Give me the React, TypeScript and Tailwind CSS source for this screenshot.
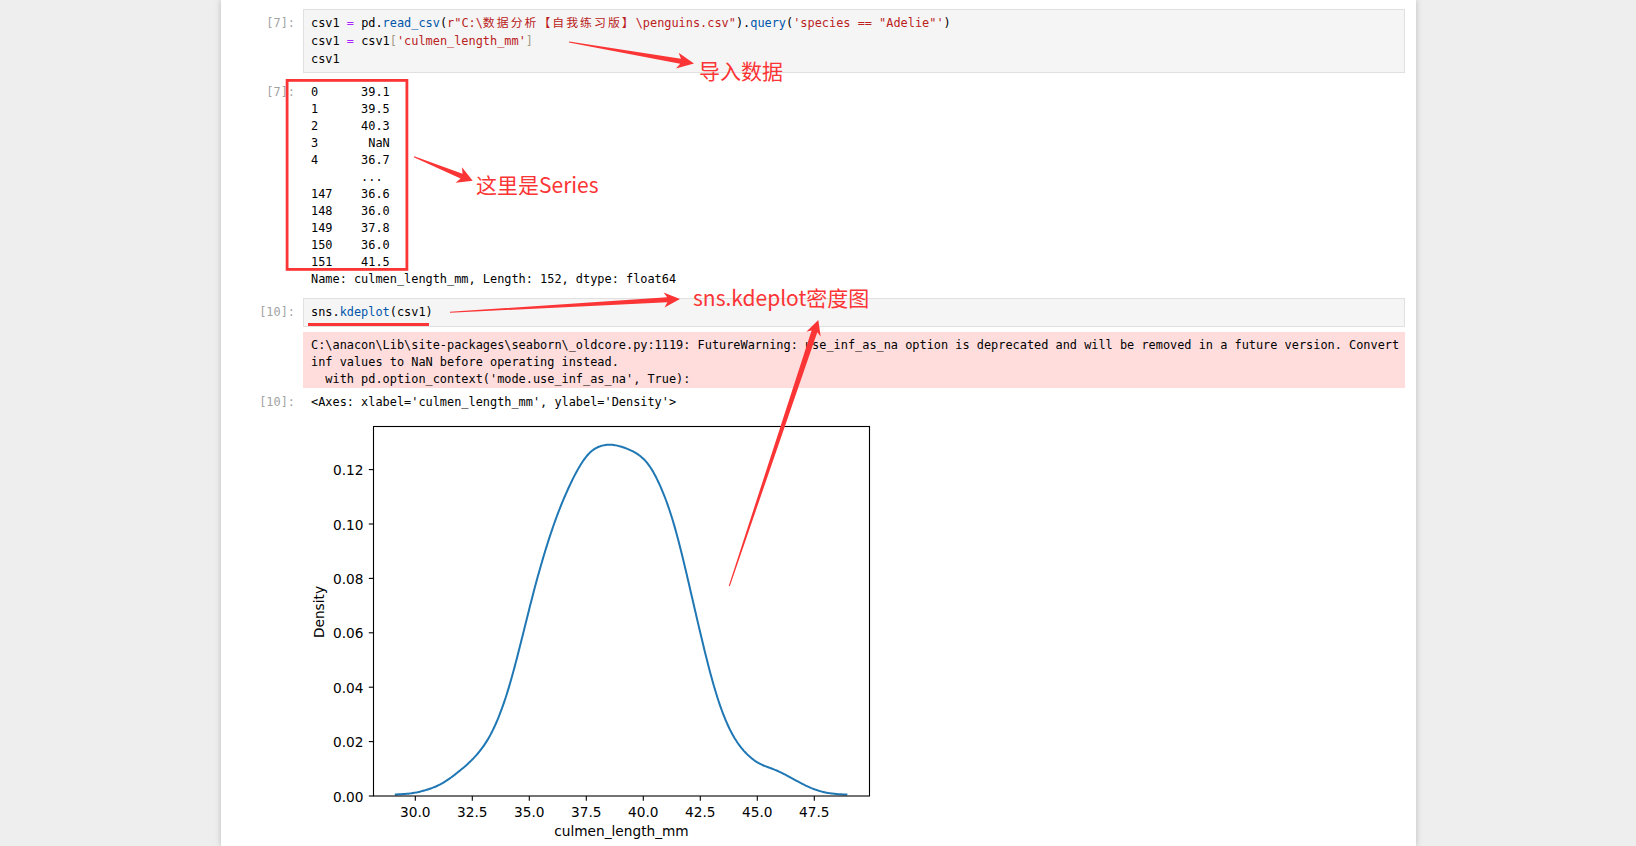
import React from 'react';

const mono = "font-['DejaVu_Sans_Mono','Noto_Sans_CJK_SC',monospace] text-[11.9px]";
const cjk = "font-['Noto_Sans_CJK_SC',sans-serif]";

// pandas Series repr, as printed
const seriesLines = [
  '0      39.1',
  '1      39.5',
  '2      40.3',
  '3       NaN',
  '4      36.7',
  '       ...',
  '147    36.6',
  '148    36.0',
  '149    37.8',
  '150    36.0',
  '151    41.5',
  'Name: culmen_length_mm, Length: 152, dtype: float64',
];

const warningLines = [
  "C:\\anacon\\Lib\\site-packages\\seaborn\\_oldcore.py:1119: FutureWarning: use_inf_as_na option is deprecated and will be removed in a future version. Convert",
  'inf values to NaN before operating instead.',
  "  with pd.option_context('mode.use_inf_as_na', True):",
];

// traced density values (x, density)
const kde: [number, number][] = [
  [29.1, 0.0004], [30.0, 0.001], [31.0, 0.0035], [31.5, 0.0062], [32.5, 0.013],
  [33.2, 0.02], [33.7, 0.029], [34.15, 0.04], [34.74, 0.06], [35.32, 0.08],
  [36.05, 0.1], [36.5, 0.1095], [37.08, 0.12], [37.66, 0.1276], [38.5, 0.1298],
  [39.4, 0.1276], [40.15, 0.1239], [40.44, 0.12], [41.03, 0.109], [41.39, 0.1],
  [41.95, 0.08], [42.49, 0.06], [43.07, 0.04], [43.5, 0.029], [44.02, 0.02],
  [44.6, 0.0145], [45.1, 0.0114], [45.84, 0.0097], [46.58, 0.0062], [47.46, 0.0023],
  [48.2, 0.0008], [48.95, 0.0004],
];

const px = (v: number) => 415.3 + 22.8 * (v - 30);
const py = (d: number) => 797 - d * 2720;

// linear interpolation on a fine grid, then a small gaussian blur to drop the kinks
const smoothCurve = () => {
  const step = 0.05;
  const xs: number[] = [];
  const ys: number[] = [];
  for (let v = kde[0][0]; v <= kde[kde.length - 1][0] + 1e-9; v += step) {
    let j = 0;
    while (j < kde.length - 2 && kde[j + 1][0] < v) j++;
    const [a, fa] = kde[j];
    const [b, fb] = kde[j + 1];
    const t = Math.min(1, Math.max(0, (v - a) / (b - a)));
    xs.push(v);
    ys.push(fa + (fb - fa) * t);
  }
  const sigma = 0.32;
  const r = Math.ceil((sigma * 3) / step);
  const out = ys.map((_, i) => {
    let sum = 0;
    let w = 0;
    for (let k = -r; k <= r; k++) {
      const idx = i + k;
      if (idx < 0 || idx >= ys.length) continue;
      const g = Math.exp(-((k * step) ** 2) / (2 * sigma * sigma));
      sum += ys[idx] * g;
      w += g;
    }
    return sum / w;
  });
  return xs
    .map((v, i) => `${i === 0 ? 'M' : 'L'}${px(v).toFixed(2)},${py(out[i]).toFixed(2)}`)
    .join(' ');
};

// tapered annotation arrow, thin at the tail
const arrowPoints = (x1: number, y1: number, x2: number, y2: number, tw: number, sw: number, hl: number, hw: number) => {
  const len = Math.hypot(x2 - x1, y2 - y1);
  const ux = (x2 - x1) / len;
  const uy = (y2 - y1) / len;
  const nx = -uy;
  const ny = ux;
  const neck = [x2 - ux * hl * 0.8, y2 - uy * hl * 0.8];
  const barb = [x2 - ux * hl, y2 - uy * hl];
  const pts = [
    [x1 + nx * tw / 2, y1 + ny * tw / 2],
    [neck[0] + nx * sw / 2, neck[1] + ny * sw / 2],
    [barb[0] + nx * hw, barb[1] + ny * hw],
    [x2, y2],
    [barb[0] - nx * hw, barb[1] - ny * hw],
    [neck[0] - nx * sw / 2, neck[1] - ny * sw / 2],
    [x1 - nx * tw / 2, y1 - ny * tw / 2],
  ];
  return pts.map(p => `${p[0].toFixed(1)},${p[1].toFixed(1)}`).join(' ');
};

const Prompt: React.FC<{ label: string; className?: string }> = ({ label, className = '' }) => (
  <div className={`w-[82px] shrink-0 pr-[8px] text-right text-[#a3a3a3] ${className}`}>{label}</div>
);

const Chart = () => {
  const yTicks = [0, 0.02, 0.04, 0.06, 0.08, 0.1, 0.12];
  const xTicks = [30, 32.5, 35, 37.5, 40, 42.5, 45, 47.5];
  const curve = smoothCurve();
  return (
    <svg width="580" height="434" className="block overflow-visible">
      <g transform="translate(-303,-412)" fontFamily="DejaVu Sans, sans-serif" fontSize="13.7" fill="#000">
        <path d={curve} fill="none" stroke="#1f77b4" strokeWidth="2" strokeLinejoin="round" strokeLinecap="butt" />
        <rect x="373.5" y="427.5" width="496" height="369.5" fill="none" stroke="#000" strokeWidth="1.1" />
        {yTicks.map(t => (
          <g key={t}>
            <line x1="368.8" x2="373.5" y1={py(t)} y2={py(t)} stroke="#000" strokeWidth="1.1" />
            <text x="363.5" y={py(t) + 5.5} textAnchor="end">{t.toFixed(2)}</text>
          </g>
        ))}
        {xTicks.map(t => (
          <g key={t}>
            <line x1={px(t)} x2={px(t)} y1="797" y2="801.7" stroke="#000" strokeWidth="1.1" />
            <text x={px(t)} y="818.2" textAnchor="middle">{t.toFixed(1)}</text>
          </g>
        ))}
        <text x="621.5" y="837" textAnchor="middle">culmen_length_mm</text>
        <text x="323.5" y="613" textAnchor="middle" transform="rotate(-90, 323.5, 613)">Density</text>
      </g>
    </svg>
  );
};

const Annotations = () => (
  <>
    <svg className="pointer-events-none absolute left-0 top-0" width="1636" height="846">
      <g fill="#fb3535">
        <polygon points={arrowPoints(569, 42, 694, 63.5, 1, 5, 17, 8)} />
        <polygon points={arrowPoints(414, 156.7, 472.7, 180.7, 1, 5, 15, 8.4)} />
        <polygon points={arrowPoints(450, 312.3, 680, 299, 1, 5, 16, 7.5)} />
        <polygon points={arrowPoints(729.3, 586, 818.3, 320, 1, 6, 15, 7.6)} />
        <rect x="308" y="323" width="121" height="3" />
      </g>
      <rect x="287.1" y="80.4" width="119.8" height="189" fill="none" stroke="#fb3535" strokeWidth="2.8" />
    </svg>
    <div className={`pointer-events-none absolute left-[699px] top-[60px] text-[21px] leading-[21px] text-[#fb3535] ${cjk}`}>导入数据</div>
    <div className={`pointer-events-none absolute left-[476px] top-[174px] text-[21px] leading-[21px] text-[#fb3535] ${cjk}`}>这里是Series</div>
    <div className={`pointer-events-none absolute left-[693px] top-[287px] text-[21px] leading-[21px] text-[#fb3535] ${cjk}`}>sns.kdeplot密度图</div>
  </>
);

const App: React.FC = () => {
  return (
    <div className="relative h-[846px] w-full overflow-hidden bg-[#eeeeee]">
      <div className={`ml-[221px] h-full w-[1195px] bg-white pt-[9px] text-black shadow-[0_0_6px_rgba(0,0,0,0.22)] ${mono}`}>
        {/* In [7] */}
        <div className="flex">
          <Prompt label="[7]:" className="pt-[5px] leading-[18px]" />
          <div className="w-[1102px] border border-[#e0e0e0] bg-[#f5f5f5] pb-[4px] pl-[7px] pt-[4px] leading-[18px] whitespace-pre">
            <div>
              csv1 <span className="text-[#aa22ff]">=</span> pd.<span className="text-[#0055aa]">read_csv</span>(
              <span className="text-[#ba2121]">
                r"C:\<span className="tracking-[2px]">数据分析【自我练习版】</span>\penguins.csv"
              </span>
              ).<span className="text-[#0055aa]">query</span>(<span className="text-[#ba2121]">'species == "Adelie"'</span>)
            </div>
            <div>
              csv1 <span className="text-[#aa22ff]">=</span> csv1<span className="text-[#a39a85]">[</span>
              <span className="text-[#ba2121]">'culmen_length_mm'</span>
              <span className="text-[#a39a85]">]</span>
            </div>
            <div>csv1</div>
          </div>
        </div>

        {/* Out [7] */}
        <div className="mt-[11px] flex leading-[17px]">
          <Prompt label="[7]:" />
          <div className="pl-[8px] whitespace-pre">
            {seriesLines.map((line, i) => (
              <div key={i}>{line}</div>
            ))}
          </div>
        </div>

        {/* In [10] */}
        <div className="mt-[10px] flex">
          <Prompt label="[10]:" className="pt-[5px] leading-[18px]" />
          <div className="w-[1102px] border border-[#e0e0e0] bg-[#f5f5f5] pb-[5px] pl-[7px] pt-[4px] leading-[18px] whitespace-pre">
            sns.<span className="text-[#0055aa]">kdeplot</span>(csv1)
          </div>
        </div>

        {/* stderr */}
        <div className="mt-[5px] flex leading-[17px]">
          <Prompt label="" />
          <div className="w-[1102px] bg-[#ffdddd] pl-[8px] pt-[5px] whitespace-pre">
            {warningLines.map((line, i) => (
              <div key={i}>{line}</div>
            ))}
          </div>
        </div>

        {/* Out [10] */}
        <div className="mt-[6px] flex leading-[17px]">
          <Prompt label="[10]:" />
          <div className="pl-[8px] whitespace-pre">&lt;Axes: xlabel='culmen_length_mm', ylabel='Density'&gt;</div>
        </div>

        <div className="flex">
          <Prompt label="" />
          <Chart />
        </div>
      </div>
      <Annotations />
    </div>
  );
};

export default App;
